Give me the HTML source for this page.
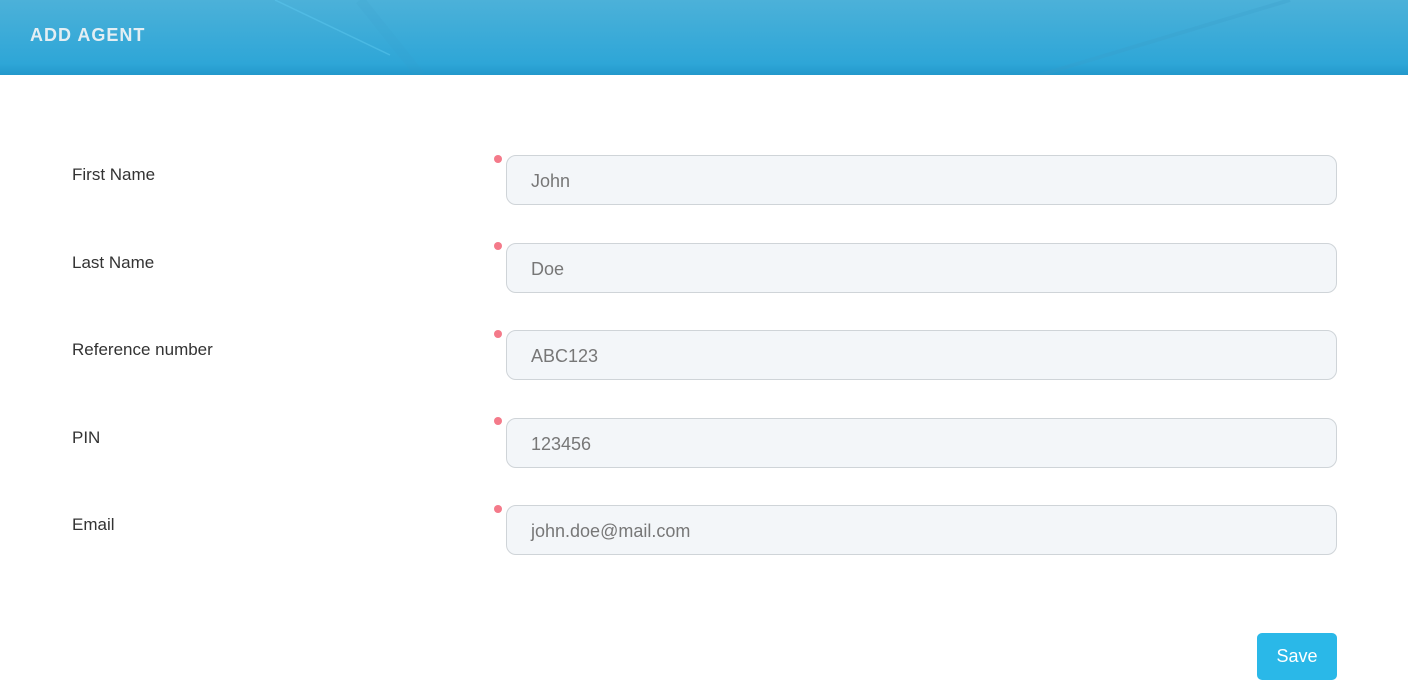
<!DOCTYPE html>
<html><head><style>
body{margin:0;width:1408px;height:694px;background:#fff;font-family:"Liberation Sans",sans-serif;overflow:hidden;position:relative}
.hdr{position:absolute;left:0;top:0;width:1408px;height:75px;background:linear-gradient(180deg,#4cb1d9 0%,#2ea6d7 85%,#2398cb 100%);overflow:hidden}
.hdr h1{position:absolute;left:30px;top:25px;margin:0;font-size:18px;font-weight:bold;color:#e4eef3;letter-spacing:1px}
.lab{position:absolute;left:72px;font-size:17px;color:#333}
.dot{position:absolute;left:494px;width:8px;height:8px;border-radius:50%;background:#f47a8a}
.inp{position:absolute;left:506px;width:829px;height:48px;border:1px solid #cfd4d8;border-radius:10px;background:#f3f6f9}
.inp span{position:absolute;left:24px;top:15px;font-size:18px;color:#777}
.btn{position:absolute;left:1257px;top:633px;width:80px;height:47px;border-radius:5px;background:#2ab8e8;color:#fff;font-size:18px;text-align:center;line-height:47px}
</style></head><body>
<div class="hdr"><svg width="1408" height="75" style="position:absolute;left:0;top:0"><line x1="275" y1="0" x2="390" y2="55" stroke="#5cc8ef" stroke-width="1.5" opacity=".5"/><line x1="360" y1="0" x2="420" y2="75" stroke="#3a9cc8" stroke-width="10" opacity=".12"/><line x1="1290" y1="0" x2="1040" y2="75" stroke="#3a9cc8" stroke-width="4" opacity=".25"/></svg><h1>ADD AGENT</h1></div>
<div class="lab" style="top:165px">First Name</div><div class="dot" style="top:155px"></div><div class="inp" style="top:155px"><span>John</span></div>
<div class="lab" style="top:253px">Last Name</div><div class="dot" style="top:242px"></div><div class="inp" style="top:243px"><span>Doe</span></div>
<div class="lab" style="top:340px">Reference number</div><div class="dot" style="top:330px"></div><div class="inp" style="top:330px"><span>ABC123</span></div>
<div class="lab" style="top:428px">PIN</div><div class="dot" style="top:417px"></div><div class="inp" style="top:418px"><span>123456</span></div>
<div class="lab" style="top:515px">Email</div><div class="dot" style="top:505px"></div><div class="inp" style="top:505px"><span>john.doe@mail.com</span></div>
<div class="btn">Save</div>
</body></html>
